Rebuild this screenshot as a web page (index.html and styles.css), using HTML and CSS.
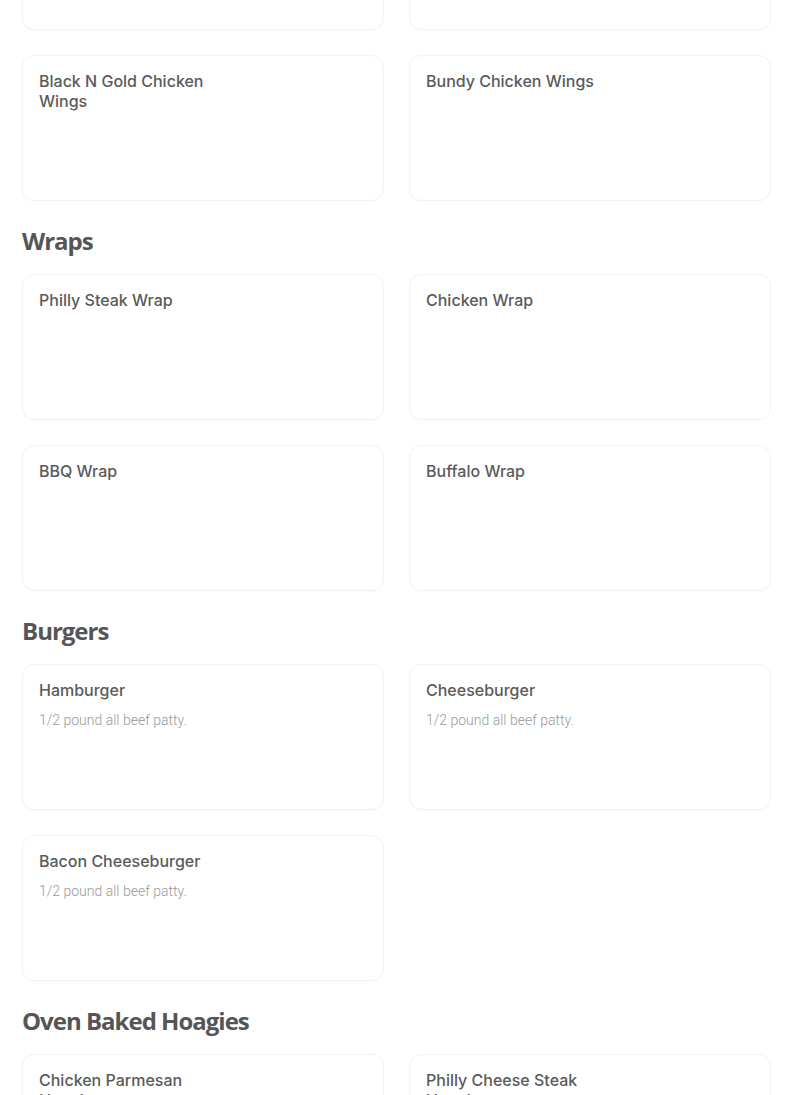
FILE: index.html
```html
<!DOCTYPE html>
<html lang="en">
<head>
  <meta charset="UTF-8" />
  <meta name="viewport" content="width=device-width, initial-scale=1.0"/>
  <title>Menu</title>
  <link rel="stylesheet" href="styles.css">
</head>
<body>
  <main class="menu">
    <div class="item-grid first-grid">
      <div class="item-card"></div>
      <div class="item-card"></div>
      <div class="item-card"><div class="item-name">Black N Gold Chicken Wings</div></div>
      <div class="item-card"><div class="item-name">Bundy Chicken Wings</div></div>
    </div>

    <h2 class="section-title">Wraps</h2>
    <div class="item-grid">
      <div class="item-card"><div class="item-name">Philly Steak Wrap</div></div>
      <div class="item-card"><div class="item-name">Chicken Wrap</div></div>
      <div class="item-card"><div class="item-name">BBQ Wrap</div></div>
      <div class="item-card"><div class="item-name">Buffalo Wrap</div></div>
    </div>

    <h2 class="section-title">Burgers</h2>
    <div class="item-grid">
      <div class="item-card">
        <div class="item-name">Hamburger</div>
        <div class="item-desc">1/2 pound all beef patty.</div>
      </div>
      <div class="item-card">
        <div class="item-name">Cheeseburger</div>
        <div class="item-desc">1/2 pound all beef patty.</div>
      </div>
      <div class="item-card">
        <div class="item-name">Bacon Cheeseburger</div>
        <div class="item-desc">1/2 pound all beef patty.</div>
      </div>
    </div>

    <h2 class="section-title">Oven Baked Hoagies</h2>
    <div class="item-grid">
      <div class="item-card"><div class="item-name">Chicken Parmesan Hoagie</div></div>
      <div class="item-card"><div class="item-name">Philly Cheese Steak Hoagie</div></div>
    </div>
  </main>
</body>
</html>
```

FILE: styles.css
```css
body {
  margin: 0;
  background: #fff;
  color: #555;
  font-family: 'Inter', 'Liberation Sans', sans-serif;
  overflow: hidden;
}

.menu {
  width: 749px;
  padding: 0 22px;
}

.item-grid {
  display: grid;
  grid-template-columns: 1fr 1fr;
  gap: 25px 25px;
}

.first-grid {
  margin-top: -116px;
}

.item-card {
  height: 146px;
  box-sizing: border-box;
  border: 1px solid #f2f2f2;
  border-radius: 12px;
  padding: 15px 16px;
  box-shadow: 0 1px 2px rgba(0, 0, 0, 0.02);
}

.item-name {
  max-width: 180px;
  font-size: 16px;
  line-height: 20px;
  font-weight: 500;
  color: #5a5a5a;
}

.item-desc {
  margin-top: 11px;
  font-family: 'Roboto', 'Liberation Sans', sans-serif;
  font-size: 14px;
  line-height: 18px;
  font-weight: 300;
  color: #999;
}

.section-title {
  margin: 24px 0 17px;
  font-family: 'Open Sans', 'Liberation Sans', sans-serif;
  font-size: 24px;
  line-height: 32px;
  font-weight: 700;
  letter-spacing: -1px;
  color: #555;
}
```
